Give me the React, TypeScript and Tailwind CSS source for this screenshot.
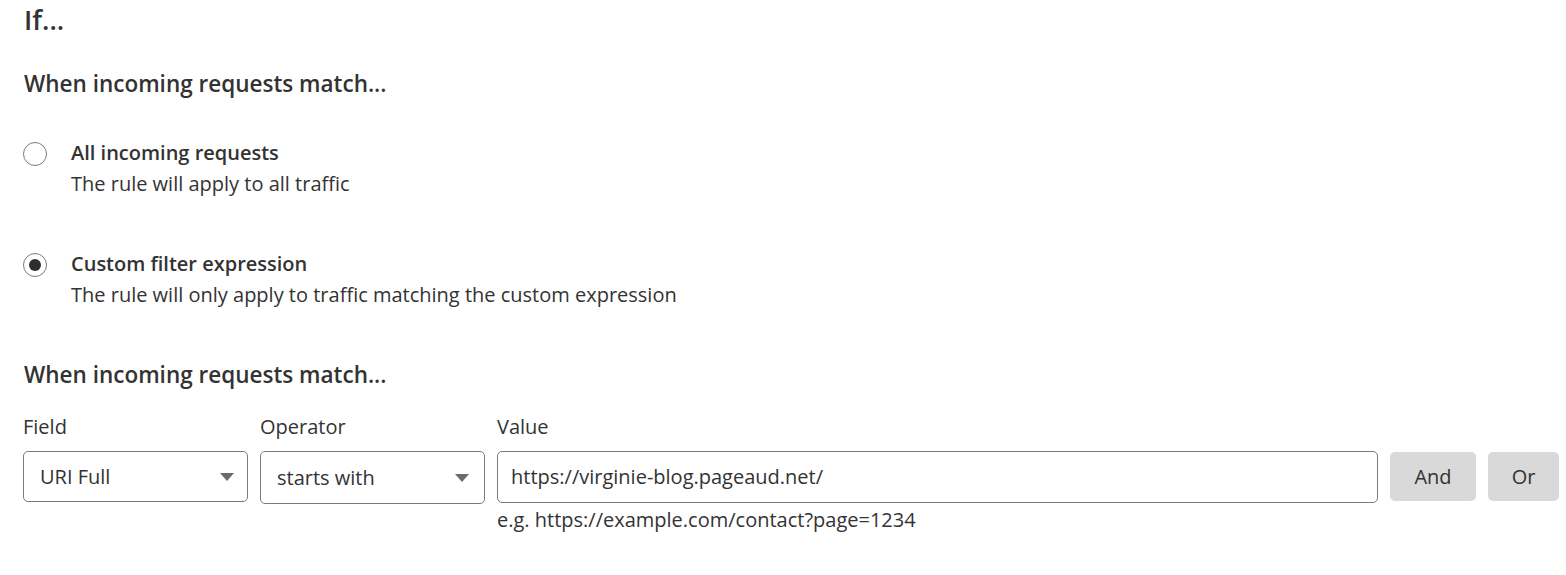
import React from "react";

function Caret() {
  return (
    <svg width="14" height="8" viewBox="0 0 14 8" className="shrink-0">
      <path d="M0 0 L14 0 L7 8 Z" fill="#6b6b6b" />
    </svg>
  );
}

function Radio({ checked }: { checked?: boolean }) {
  return (
    <div className="w-[24px] h-[24px] rounded-full border border-[#7a7a7a] bg-white flex items-center justify-center shrink-0">
      {checked && <div className="w-[12px] h-[12px] rounded-full bg-[#2e2e2e]" />}
    </div>
  );
}

export default function App() {
  return (
    <div
      className="bg-white w-[1566px] h-[575px] pl-[24px] pr-[6px] text-[#333333]"
      style={{ fontFamily: '"Open Sans", "Noto Sans", sans-serif' }}
    >
      <h1 className="text-[27px] font-semibold leading-[40px]">If...</h1>
      <h2 className="mt-[29px] text-[22.5px] font-semibold leading-[30px]">When incoming requests match...</h2>

      <div className="mt-[39px] flex items-start gap-[24px]">
        <div className="-ml-[1px] mt-[4px]"><Radio /></div>
        <div>
          <div className="text-[20px] font-semibold leading-[30px]">All incoming requests</div>
          <div className="text-[20px] leading-[31px]">The rule will apply to all traffic</div>
        </div>
      </div>

      <div className="mt-[50px] flex items-start gap-[24px]">
        <div className="-ml-[1px] mt-[4px]"><Radio checked /></div>
        <div>
          <div className="text-[20px] font-semibold leading-[30px]">Custom filter expression</div>
          <div className="text-[20px] leading-[31px]">The rule will only apply to traffic matching the custom expression</div>
        </div>
      </div>

      <h2 className="mt-[50px] text-[22.5px] font-semibold leading-[30px]">When incoming requests match...</h2>

      <div className="mt-[22px] flex items-start gap-[12px]">
        <div className="w-[225px] shrink-0 -ml-[1px]">
          <div className="text-[20px] leading-[30px] mb-[9px]">Field</div>
          <div className="h-[51px] rounded-[5px] border border-[#7a7a7a] flex items-center justify-between pl-[16px] pr-[13px] text-[20px]">
            <span>URI Full</span>
            <Caret />
          </div>
        </div>
        <div className="w-[225px] shrink-0">
          <div className="text-[20px] leading-[30px] mb-[9px]">Operator</div>
          <div className="h-[53px] rounded-[5px] border border-[#7a7a7a] flex items-center justify-between pl-[16px] pr-[15px] text-[20px]">
            <span>starts with</span>
            <Caret />
          </div>
        </div>
        <div className="w-[881px] shrink-0">
          <div className="text-[20px] leading-[30px] mb-[9px]">Value</div>
          <div className="h-[52px] rounded-[5px] border border-[#7a7a7a] flex items-center pl-[13px] text-[20px]">
            https://virginie-blog.pageaud.net/
          </div>
          <div className="text-[20px] leading-[30px] mt-[2px]">e.g. https://example.com/contact?page=1234</div>
        </div>
        <button className="shrink-0 mt-[40px] w-[86px] h-[49px] rounded-[5px] bg-[#d9d9d9] text-[20px] text-[#333333]">And</button>
        <button className="shrink-0 mt-[40px] w-[71px] h-[49px] rounded-[5px] bg-[#d9d9d9] text-[20px] text-[#333333]">Or</button>
      </div>
    </div>
  );
}
